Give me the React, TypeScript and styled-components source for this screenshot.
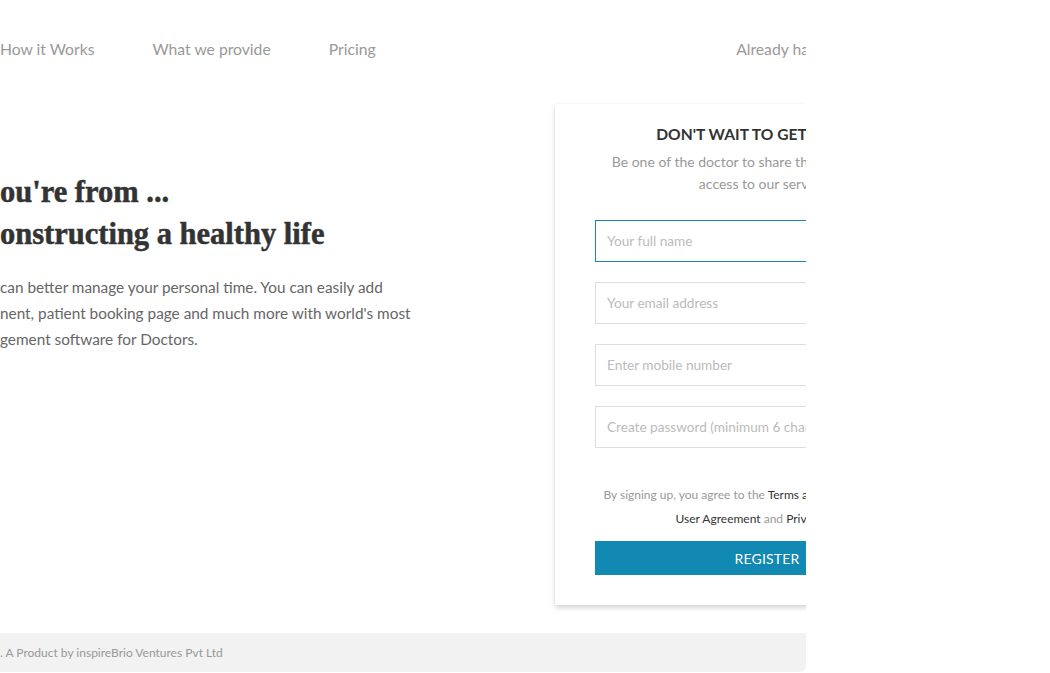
import React from "react";
import styled, { createGlobalStyle } from "styled-components";

const Global = createGlobalStyle`
  html, body { margin: 0; padding: 0; background: #ffffff; }
  body { font-family: Lato, "Open Sans", sans-serif; }
  * { box-sizing: border-box; }
`;

const Frame = styled.div`
  width: 806px;
  height: 673px;
  overflow: hidden;
  display: flex;
  flex-direction: column;
`;

const Inner = styled.div`
  width: 979px;
  flex: none;
`;

const Nav = styled.nav`
  height: 98px;
  display: flex;
  align-items: center;
  padding-right: 27px;
`;

const NavLinks = styled.div`
  display: flex;
  gap: 58px;
`;

const NavLink = styled.a`
  font-size: 15.7px;
  color: #999999;
  text-decoration: none;
  white-space: nowrap;
`;

const NavRight = styled(NavLink)`
  margin-left: auto;
`;

const Main = styled.main`
  display: flex;
  justify-content: space-between;
  padding-top: 6px;
`;

const Hero = styled.section`
  padding-top: 67px;
  width: 480px;
`;

const Headline = styled.h1`
  margin: 0;
  font-family: "Liberation Serif", "DejaVu Serif", serif;
  font-weight: 700;
  font-size: 30.5px;
  line-height: 42px;
  color: #333333;
  white-space: nowrap;
  -webkit-text-stroke: 0.5px #333333;
`;

const Lead = styled.p`
  margin: 19px 0 0;
  font-size: 15.35px;
  line-height: 26px;
  color: #666666;
  white-space: nowrap;
`;

const Card = styled.section`
  width: 424px;
  padding: 20px 40px 30px;
  background: #ffffff;
  box-shadow: 0 3px 5px rgba(0, 0, 0, 0.16), 0 0 2px rgba(0, 0, 0, 0.05);
  text-align: center;
`;

const CardTitle = styled.h2`
  margin: 0;
  font-size: 15.6px;
  line-height: 20px;
  font-weight: 700;
  color: #333333;
  white-space: nowrap;
`;

const CardSub = styled.p`
  margin: 7px 0 0;
  font-size: 14px;
  line-height: 22px;
  color: #999999;
  white-space: nowrap;
`;

const Form = styled.form`
  margin-top: 25px;
  display: flex;
  flex-direction: column;
  gap: 20px;
`;

const Input = styled.input<{ $active?: boolean }>`
  height: 42px;
  width: 100%;
  border: 1px solid ${(p) => (p.$active ? "#1a86ad" : "#dddddd")};
  padding: 0 11px;
  font-family: Lato, sans-serif;
  font-size: 13.6px;
  color: #333;
  outline: none;
  border-radius: 0;
  &::placeholder { color: #bbbbbb; }
`;

const Terms = styled.p`
  margin: 35px 0 0;
  font-size: 12px;
  line-height: 24px;
  color: #999999;
  white-space: nowrap;
`;

const TermLink = styled.a`
  color: #333333;
  text-decoration: none;
`;

const Register = styled.button`
  margin-top: 10px;
  width: 100%;
  height: 34px;
  border: none;
  background: #1189b3;
  color: #ffffff;
  font-family: Lato, sans-serif;
  font-size: 14px;
  letter-spacing: 0.2px;
`;

const Footer = styled.footer`
  margin-top: 28px;
  width: 806px;
  height: 39px;
  flex: none;
  background: #f2f2f2;
  border-radius: 0 0 6px 0;
  display: flex;
  align-items: center;
  font-size: 12px;
  color: #999999;
  white-space: nowrap;
`;

export default function App() {
  return (
    <>
      <Global />
      <Frame>
        <Inner>
          <Nav>
            <NavLinks>
              <NavLink href="#">How it Works</NavLink>
              <NavLink href="#">What we provide</NavLink>
              <NavLink href="#">Pricing</NavLink>
            </NavLinks>
            <NavRight href="#">Already have an account? Login</NavRight>
          </Nav>
          <Main>
            <Hero>
              <Headline>
                ou're from ...
                <br />
                onstructing a healthy life
              </Headline>
              <Lead>
                can better manage your personal time. You can easily add
                <br />
                nent, patient booking page and much more with world's most
                <br />
                gement software for Doctors.
              </Lead>
            </Hero>
            <Card>
              <CardTitle>DON'T WAIT TO GET STARTED</CardTitle>
              <CardSub>
                Be one of the doctor to share this platform and get
                <br />
                access to our services.
              </CardSub>
              <Form onSubmit={(e) => e.preventDefault()}>
                <Input $active placeholder="Your full name" />
                <Input placeholder="Your email address" />
                <Input placeholder="Enter mobile number" />
                <Input type="password" placeholder="Create password (minimum 6 characters)" />
              </Form>
              <Terms>
                By signing up, you agree to the <TermLink href="#">Terms and Conditions of Usage</TermLink>
                <br />
                <TermLink href="#">User Agreement</TermLink> and <TermLink href="#">Privacy Policy</TermLink>
              </Terms>
              <Register type="button">REGISTER</Register>
            </Card>
          </Main>
        </Inner>
        <Footer>. A Product by inspireBrio Ventures Pvt Ltd</Footer>
      </Frame>
    </>
  );
}
